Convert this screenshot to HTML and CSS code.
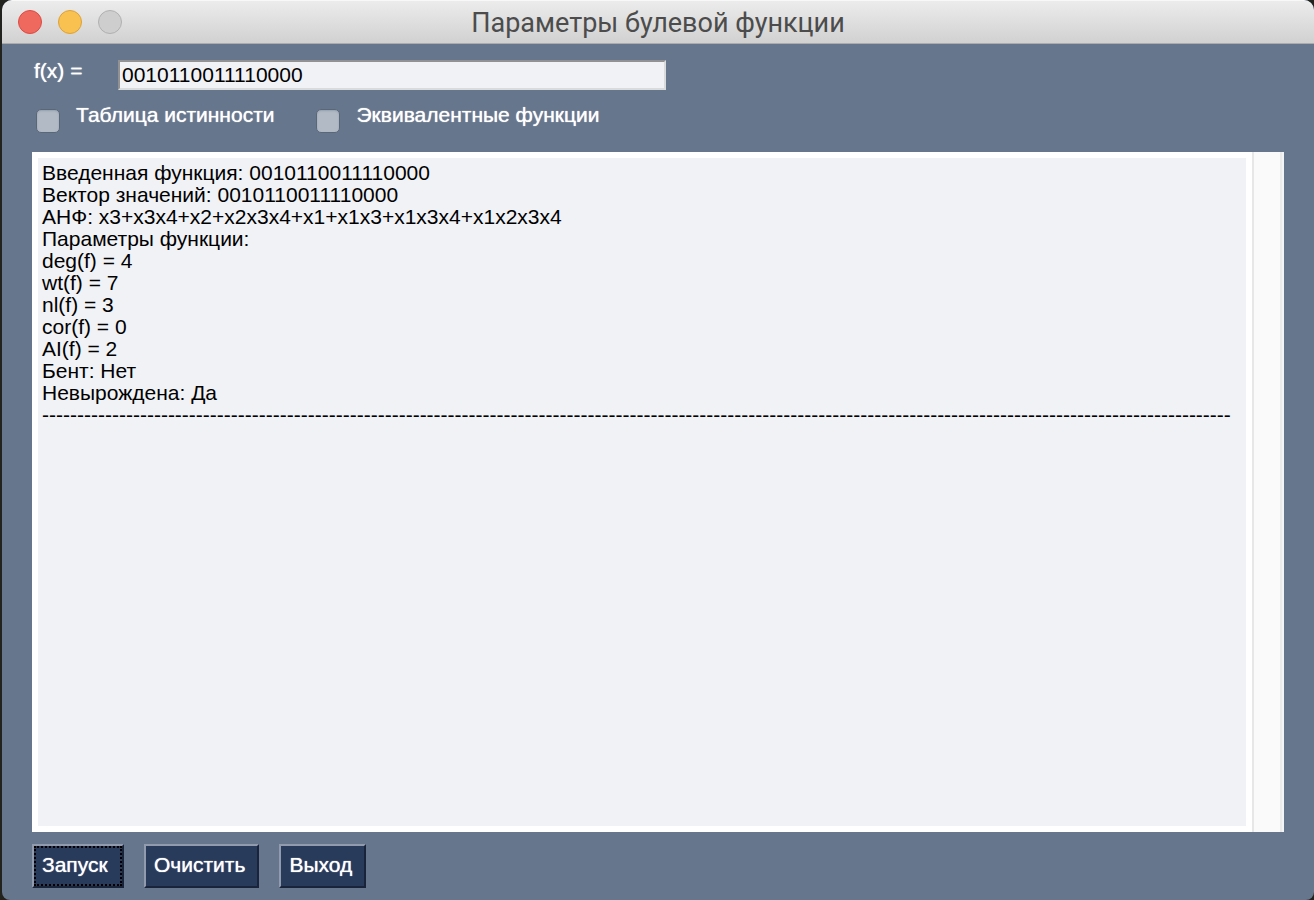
FILE: index.html
```html
<!DOCTYPE html>
<html lang="ru">
<head>
<meta charset="utf-8">
<title>Параметры булевой функции</title>
<link rel="stylesheet" href="styles.css">
</head>
<body>
<div class="window">
  <header class="titlebar">
    <div class="lights">
      <button class="light light-close" type="button" aria-label="Закрыть"></button>
      <button class="light light-minimize" type="button" aria-label="Свернуть"></button>
      <button class="light light-zoom" type="button" aria-label="Развернуть" disabled></button>
    </div>
    <h1 class="title">Параметры булевой функции</h1>
  </header>
  <main class="content">
    <div class="function-row">
      <label class="caption" for="fx">f(x) =</label>
      <input class="function-input" id="fx" type="text" value="0010110011110000">
    </div>
    <div class="options">
      <div class="option">
        <input class="check" id="truth" type="checkbox">
        <label class="caption" for="truth">Таблица истинности</label>
      </div>
      <div class="option">
        <input class="check" id="equiv" type="checkbox">
        <label class="caption" for="equiv">Эквивалентные функции</label>
      </div>
    </div>
    <div class="output">
      <textarea class="output-text" aria-label="Результат" readonly>Введенная функция: 0010110011110000
Вектор значений: 0010110011110000
АНФ: x3+x3x4+x2+x2x3x4+x1+x1x3+x1x3x4+x1x2x3x4
Параметры функции:
deg(f) = 4
wt(f) = 7
nl(f) = 3
cor(f) = 0
AI(f) = 2
Бент: Нет
Невырождена: Да
--------------------------------------------------------------------------------------------------------------------------------------------------------------------------</textarea>
      <div class="scroll-track"></div>
    </div>
    <div class="actions">
      <button class="action action-default" type="button">Запуск</button>
      <button class="action" type="button">Очистить</button>
      <button class="action" type="button">Выход</button>
    </div>
  </main>
</div>
</body>
</html>
```
FILE: styles.css
```css
* { box-sizing: border-box; }

body {
  margin: 0;
  background: #22221e;
  font-family: "Liberation Sans", Arial, sans-serif;
  font-size: 21px;
  line-height: 22px;
}

.window {
  display: flex;
  flex-direction: column;
  height: 100vh;
  margin-left: 2px;
  border-radius: 10px 10px 8px 8px;
  overflow: hidden;
  background: #66768c;
}

.titlebar {
  display: grid;
  grid-template-columns: 120px 1fr 120px;
  align-items: center;
  height: 44px;
  flex: none;
  padding: 0 16px;
  border-top: 1px solid #f8f8f8;
  border-bottom: 1px solid #acacac;
  background: linear-gradient(#ececec, #d1d1d1);
}

.lights { display: flex; gap: 16px; }

.light {
  width: 24px;
  height: 24px;
  padding: 0;
  border: 1px solid;
  border-radius: 50%;
}
.light-close { background: #f0695e; border-color: #dc4b43; }
.light-minimize { background: #f8c150; border-color: #dda137; }
.light-zoom { background: #cecece; border-color: #b0b0b0; }

.title {
  margin: 0;
  padding-top: 2px;
  text-align: center;
  font: 400 27px/32px Roboto, sans-serif;
  color: #4c4c4c;
}

.content {
  display: flex;
  flex-direction: column;
  flex: 1;
  min-height: 0;
  padding: 16px 30px 12px;
}

.caption {
  color: #fff;
  text-shadow: 0 0 1px #fff;
}

.function-row {
  display: grid;
  grid-template-columns: 84px minmax(0, 548px);
  column-gap: 2px;
  flex: none;
}
.function-row .caption { padding-left: 2px; }

.function-input {
  height: 30px;
  padding: 0 2px;
  border: 2px solid;
  border-color: #929292 #d9dbdd #d9dbdd #929292;
  background: #f0f2f6;
  color: #000;
  font: inherit;
  outline: none;
}

.options {
  display: flex;
  gap: 42px;
  flex: none;
  margin-top: 14px;
  padding-left: 4px;
}
.option { display: flex; gap: 16px; }

.check {
  appearance: none;
  width: 24px;
  height: 24px;
  margin: 5px 0 0;
  border: 1px solid #596779;
  border-radius: 5px;
  background: #b1bac5;
  box-shadow: inset 0 1px 2px #95a0ae;
}

.output {
  display: flex;
  flex: 1;
  min-height: 0;
  margin-top: 19px;
}

.output-text {
  flex: 1;
  min-width: 0;
  padding: 4px;
  border: 6px solid #fff;
  background: #f0f2f6;
  color: #000;
  font: inherit;
  resize: none;
  outline: none;
  overflow: hidden;
}

.scroll-track {
  width: 32px;
  border-left: 2px solid #e7e7e7;
  border-right: 2px solid #f3f4f6;
  background: #fafafa;
  box-shadow: inset -2px 0 #ebebeb;
}

.actions {
  display: flex;
  gap: 20px;
  flex: none;
  margin-top: 12px;
}

.action {
  height: 44px;
  padding: 0 12px 2px 8px;
  border: 2px solid;
  border-color: #929bae #19233a #19233a #929bae;
  background: #283b5b;
  color: #fff;
  font: inherit;
  text-align: left;
  text-shadow: 0 0 1px #fff;
}
.action-default {
  min-width: 92px;
  outline: 2px dotted #000;
  outline-offset: -4px;
}
```
